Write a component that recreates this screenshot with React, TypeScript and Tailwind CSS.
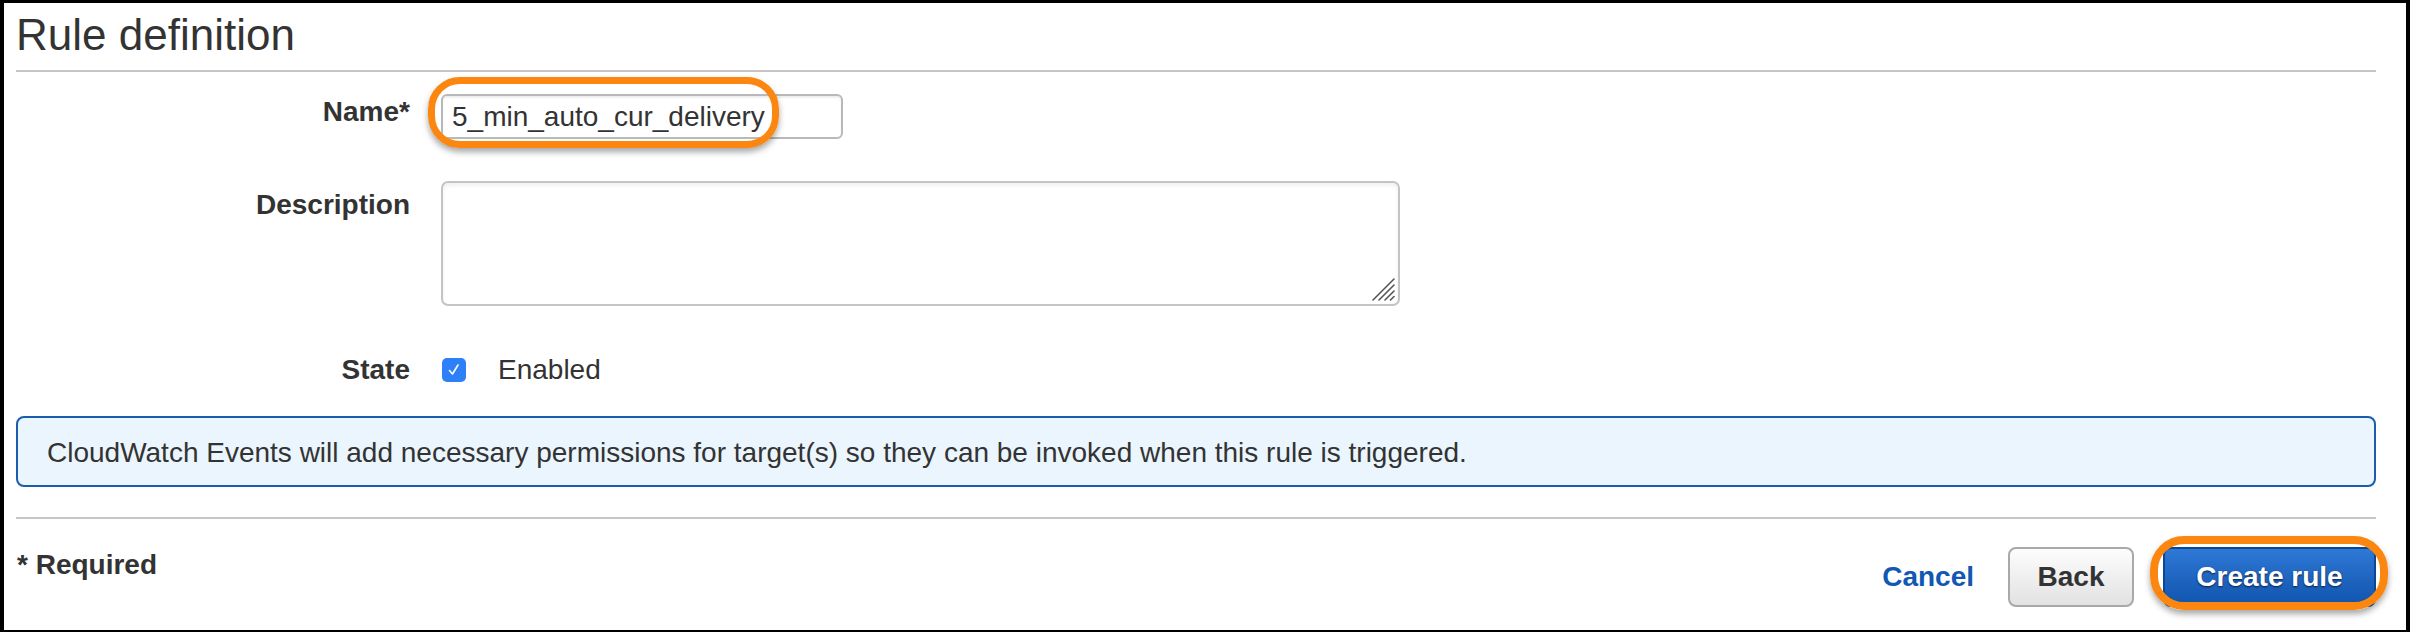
export default function App() {
  return (
    <div className="w-[2410px] h-[632px] overflow-hidden bg-white border-solid border-black border-t-[3px] border-l-[4px] border-b-[2px] border-r-[4px] pl-[12px] pr-[30px] pt-[7px] font-['Liberation_Sans',Arial,sans-serif] text-[#333333]">
      <h1 className="text-[44px] leading-[50px] font-normal text-[#333333]">Rule definition</h1>
      <div className="mt-[10px] h-[2px] bg-[#c6c6c6]" />

      {/* Name row */}
      <div className="mt-[22px] flex gap-[31px]">
        <div className="w-[394px] text-right font-bold text-[28px] leading-[32px] pt-[2px]">Name*</div>
        <div className="relative">
          <div className="w-[402px] h-[45px] border-2 border-[#b9b9b9] rounded-[6px] pl-[9px] text-[28px] leading-[41px] shadow-[inset_0_2px_2px_rgba(0,0,0,0.07)] whitespace-nowrap">
            5_min_auto_cur_delivery
          </div>
          <div className="absolute left-[-13px] top-[-17px] w-[351px] h-[71px] rounded-[32px] border-[7px] border-[#fb8610] shadow-[0_4px_6px_rgba(0,0,0,0.35)] pointer-events-none" />
        </div>
      </div>

      {/* Description row */}
      <div className="mt-[42px] flex gap-[31px]">
        <div className="w-[394px] text-right font-bold text-[28px] leading-[32px] pt-[8px]">Description</div>
        <div className="relative w-[959px] h-[125px] border-2 border-[#c4c4c4] rounded-[7px] shadow-[inset_0_3px_4px_rgba(0,0,0,0.06)]">
          <svg className="absolute right-[3px] bottom-[3px]" width="24" height="24" viewBox="0 0 24 24">
            <g stroke="#555555" strokeWidth="1.6" strokeLinecap="round">
              <line x1="2" y1="23" x2="23" y2="2" />
              <line x1="8" y1="23" x2="23" y2="8" />
              <line x1="14" y1="23" x2="23" y2="14" />
              <line x1="19.5" y1="23" x2="23" y2="19.5" />
            </g>
          </svg>
        </div>
      </div>

      {/* State row */}
      <div className="mt-[48px] flex items-center h-[32px] gap-[31px]">
        <div className="w-[394px] text-right font-bold text-[28px] leading-[32px]">State</div>
        <div className="flex items-center">
          <div className="w-[24px] h-[24px] rounded-[5px] bg-[#2d80f8] flex items-center justify-center ml-[1px]">
            <svg width="18" height="18" viewBox="0 0 18 18">
              <polyline points="4.5,9.5 7.5,13 13,4" fill="none" stroke="#ffffff" strokeWidth="1.6" strokeLinecap="round" strokeLinejoin="round" />
            </svg>
          </div>
          <span className="ml-[32px] text-[28px] leading-[32px]">Enabled</span>
        </div>
      </div>

      {/* Info box */}
      <div className="mt-[30px] border-2 border-[#1a5cae] bg-[#ebf5fe] rounded-[8px] pl-[29px] pt-[19px] pb-[16px] text-[28px] leading-[32px]">
        CloudWatch Events will add necessary permissions for target(s) so they can be invoked when this rule is triggered.
      </div>

      <div className="mt-[30px] h-[2px] bg-[#c6c6c6]" />

      {/* Footer */}
      <div className="mt-[28px] flex justify-between items-start">
        <div className="mt-[2px] pl-[1px] font-bold text-[28px] leading-[32px]">* Required</div>
        <div className="flex items-center">
          <span className="font-bold text-[28px] leading-[32px] text-[#1158b4] mr-[34px]">Cancel</span>
          <div className="w-[126px] h-[60px] rounded-[8px] border-2 border-[#a9a9a9] bg-gradient-to-b from-[#fdfdfd] to-[#e2e2e2] flex items-center justify-center font-bold text-[28px] leading-[32px] text-[#333333]">
            Back
          </div>
          <div className="relative ml-[29px]">
            <div className="w-[213px] h-[60px] rounded-[8px] border-2 border-[#0c4796] bg-gradient-to-b from-[#2f78d6] to-[#0f54ad] flex items-center justify-center font-bold text-[28px] leading-[32px] text-white text-shadow-[0_1px_2px_rgba(0,0,0,0.7)]">
              Create rule
            </div>
            <div className="absolute left-[-13px] top-[-11px] w-[238px] h-[74px] rounded-[34px] border-[8px] border-[#fb8610] shadow-[0_4px_6px_rgba(0,0,0,0.35)] pointer-events-none" />
          </div>
        </div>
      </div>
    </div>
  );
}
